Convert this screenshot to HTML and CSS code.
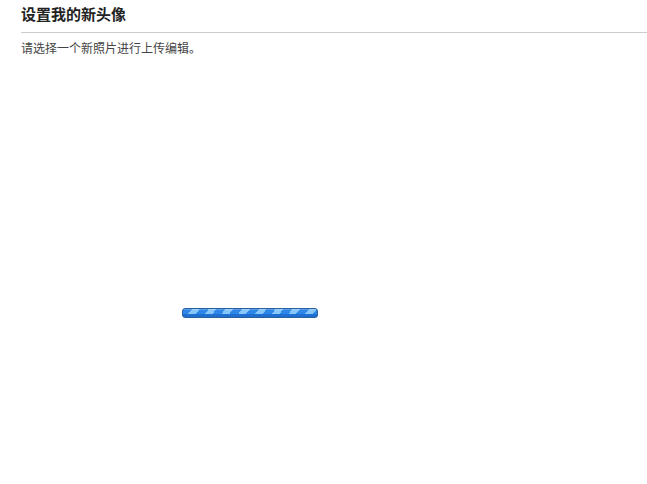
FILE: index.html
```html
<!DOCTYPE html>
<html lang="zh">
<head>
<meta charset="utf-8">
<title>设置我的新头像</title>
<link rel="stylesheet" href="styles.css">
</head>
<body>
<div class="page">
  <h2 class="title">设置我的新头像</h2>
  <p class="desc">请选择一个新照片进行上传编辑。</p>
  <div class="stage">
    <div class="progress"></div>
  </div>
</div>
</body>
</html>
```
FILE: styles.css
```css
html, body {
  margin: 0;
  padding: 0;
  background: #fff;
}
.page {
  padding: 6px 0 0 21px;
  font-family: "Liberation Sans", Arial, "Noto Sans CJK SC", sans-serif;
}
.title {
  margin: 0;
  font-size: 15px;
  line-height: 18px;
  font-weight: bold;
  color: #222;
  padding-bottom: 8px;
  border-bottom: 1px solid #cccccc;
}
.desc {
  margin: 0;
  padding-top: 8px;
  font-size: 12px;
  line-height: 16px;
  color: #444;
}
.stage {
  padding: 251px 0 0 161px;
}
.progress {
  width: 134px;
  height: 8px;
  border: 1px solid #2a5f9e;
  border-radius: 3px;
  background:
    linear-gradient(to bottom, rgba(255,255,255,0.2) 0 1px, rgba(255,255,255,0) 1px 5px, #1f6fd0 5px 8px),
    repeating-linear-gradient(129deg, #2e86e8 0 7px, #86c6f8 7px 13px);
}
```
